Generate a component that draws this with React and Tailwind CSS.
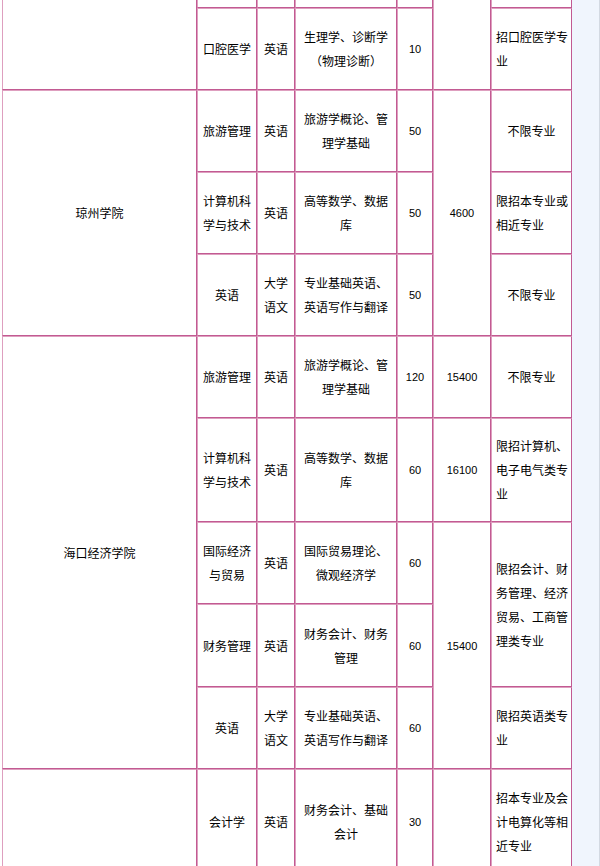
const cellBase =
  "border border-t-[#de9fbf] border-l-[#de9fbf] border-r-[#c25a92] border-b-[#c25a92] align-middle";

function Td({ children, rowSpan, align = "center", num = false, top = true, pad = "px-[4px]" }) {
  return (
    <td
      rowSpan={rowSpan}
      className={[
        cellBase,
        top ? "" : "border-t-0",
        align === "left" ? "text-left" : "text-center",
        num ? "font-['Liberation_Sans',sans-serif] text-[11px]" : "",
        pad,
      ].join(" ")}
    >
      {children}
    </td>
  );
}

function Major({ children }) {
  return (
    <Td align="left" pad="pl-[4px] pr-[1px]">
      {children}
    </Td>
  );
}

export default function App() {
  return (
    <div className="flex min-h-screen bg-white font-['Noto_Sans_CJK_SC','Noto_Sans',sans-serif] text-[12px] leading-[24px] text-black">
      <div className="pl-[2px]">
        <table className="w-[570px] table-fixed border-separate border-spacing-0">
          <colgroup>
            <col className="w-[195px]" />
            <col className="w-[60px]" />
            <col className="w-[38px]" />
            <col className="w-[102px]" />
            <col className="w-[36px]" />
            <col className="w-[58px]" />
            <col className="w-[81px]" />
          </colgroup>
          <tbody>
            {/* tail of the previous row */}
            <tr className="h-[8px]">
              <Td rowSpan={2} top={false}></Td>
              <Td top={false}></Td>
              <Td top={false}></Td>
              <Td top={false}></Td>
              <Td top={false}></Td>
              <Td rowSpan={2} top={false}></Td>
              <Td top={false}></Td>
            </tr>
            <tr className="h-[82px]">
              <Td>口腔医学</Td>
              <Td>英语</Td>
              <Td>生理学、诊断学（物理诊断）</Td>
              <Td num>10</Td>
              <Major>招口腔医学专业</Major>
            </tr>

            {/* 琼州学院 */}
            <tr className="h-[82px]">
              <Td rowSpan={3}>琼州学院</Td>
              <Td>旅游管理</Td>
              <Td>英语</Td>
              <Td>旅游学概论、管理学基础</Td>
              <Td num>50</Td>
              <Td num rowSpan={3}>4600</Td>
              <Td>不限专业</Td>
            </tr>
            <tr className="h-[82px]">
              <Td>计算机科学与技术</Td>
              <Td>英语</Td>
              <Td>高等数学、数据库</Td>
              <Td num>50</Td>
              <Major>限招本专业或相近专业</Major>
            </tr>
            <tr className="h-[82px]">
              <Td>英语</Td>
              <Td>大学语文</Td>
              <Td>专业基础英语、英语写作与翻译</Td>
              <Td num>50</Td>
              <Td>不限专业</Td>
            </tr>

            {/* 海口经济学院 */}
            <tr className="h-[82px]">
              <Td rowSpan={5}>海口经济学院</Td>
              <Td>旅游管理</Td>
              <Td>英语</Td>
              <Td>旅游学概论、管理学基础</Td>
              <Td num>120</Td>
              <Td num>15400</Td>
              <Td>不限专业</Td>
            </tr>
            <tr className="h-[104px]">
              <Td>计算机科学与技术</Td>
              <Td>英语</Td>
              <Td>高等数学、数据库</Td>
              <Td num>60</Td>
              <Td num>16100</Td>
              <Major>限招计算机、电子电气类专业</Major>
            </tr>
            <tr className="h-[82px]">
              <Td>国际经济与贸易</Td>
              <Td>英语</Td>
              <Td>国际贸易理论、微观经济学</Td>
              <Td num>60</Td>
              <Td num rowSpan={3}>15400</Td>
              <Td align="left" pad="pl-[4px] pr-[1px]" rowSpan={2}>
                限招会计、财务管理、经济贸易、工商管理类专业
              </Td>
            </tr>
            <tr className="h-[83px]">
              <Td>财务管理</Td>
              <Td>英语</Td>
              <Td>财务会计、财务管理</Td>
              <Td num>60</Td>
            </tr>
            <tr className="h-[82px]">
              <Td>英语</Td>
              <Td>大学语文</Td>
              <Td>专业基础英语、英语写作与翻译</Td>
              <Td num>60</Td>
              <Major>限招英语类专业</Major>
            </tr>

            {/* next college */}
            <tr className="h-[106px]">
              <Td></Td>
              <Td>会计学</Td>
              <Td>英语</Td>
              <Td>财务会计、基础会计</Td>
              <Td num>30</Td>
              <Td num></Td>
              <Major>招本专业及会计电算化等相近专业</Major>
            </tr>
          </tbody>
        </table>
      </div>
      <div className="w-[28px] shrink-0 border-r border-[#d3d9e2] bg-[#f0f5fd]"></div>
    </div>
  );
}
